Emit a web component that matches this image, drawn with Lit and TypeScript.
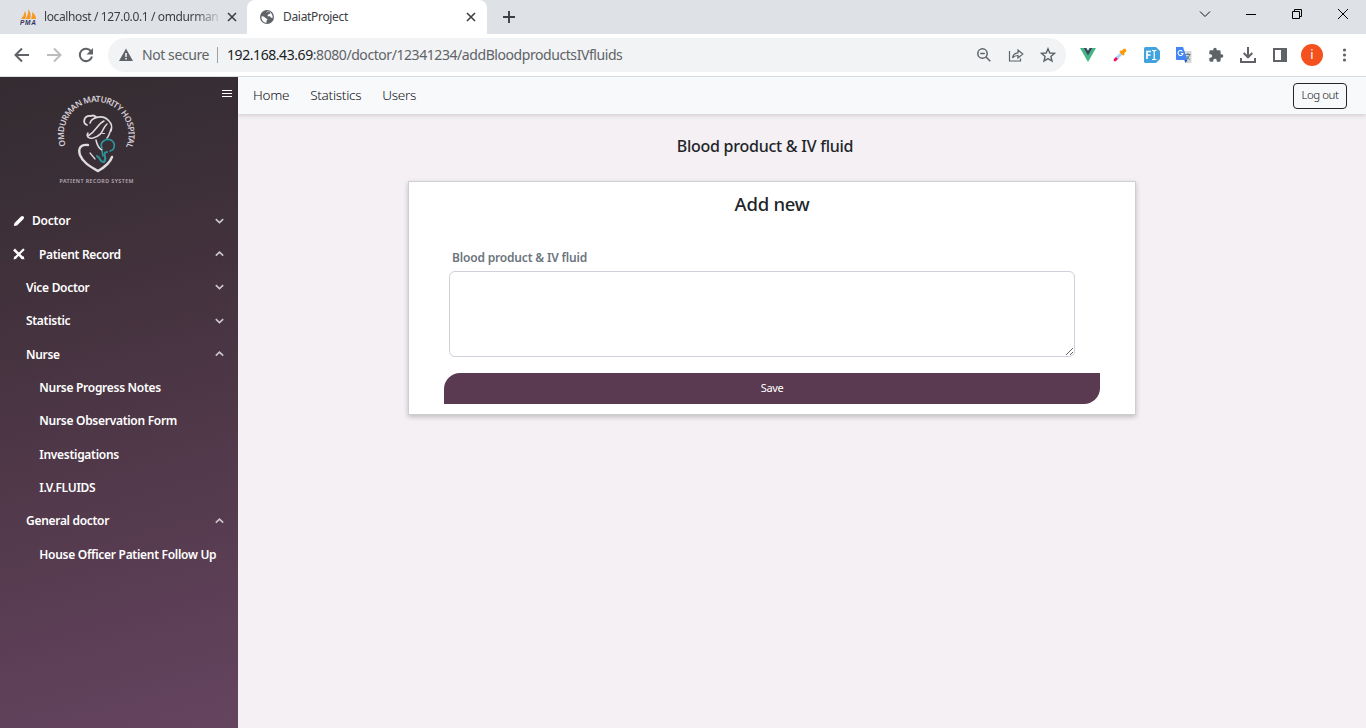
import { LitElement, html, css, svg } from "lit";
import { customElement } from "lit/decorators.js";

const chevron = (up: boolean) => html`<svg class="chev" width="9" height="6" viewBox="0 0 9 6"><path d=${up ? "M.8 4.6L4.5 1.200L8.2 4.600" : "M.8 1.200L4.5 4.600L8.2 1.200"} fill="none" stroke="#cfc9ce" stroke-width="1.6"/></svg>`;

@customElement("browser-tabs")
export class BrowserTabs extends LitElement {
  static styles = css`
    :host { display: flex; height: 34px; background: #dee1e6; color: #3c4043; font: 12px/34px "Noto Sans", sans-serif; }
    .tab { display: flex; align-items: center; box-sizing: border-box; height: 34px; }
    .first { width: 247px; padding-left: 20px; padding-right: 9px; }
    .active { width: 240px; background: #fff; border-radius: 8px 8px 0 0; padding-left: 12px; padding-right: 10px; }
    .label { white-space: nowrap; flex: 1; letter-spacing: -.21px; }
    .active .label { letter-spacing: -.32px; margin-left: 8px; }
    .first .label { margin-left: 7px; margin-right: 7px; -webkit-mask-image: linear-gradient(90deg, #000 150px, transparent 179px); mask-image: linear-gradient(90deg, #000 150px, transparent 179px); letter-spacing: -.38px; }
    .plus { margin: 10px 0 0 15px; }
    .window { margin-left: auto; display: flex; align-items: center; gap: 32px; padding: 0 16px 6px 0; }
    svg { display: block; flex: none; }
  `;
  render() {
    const close = html`<svg width="12" height="12" viewBox="0 0 12 12"><path d="M2 2l8 8M10 2l-8 8" stroke="#3c4043" stroke-width="1.6"/></svg>`;
    return html`
      <div class="tab first">
        <svg width="17" height="16" viewBox="0 0 17 16"><path d="M1 10Q4 7 5 2Q7 6 5 10ZM5.500 10Q9 5 8 0Q12 5 10 10ZM11 10Q13 6 12 3Q16 6 16 10Z" fill="#f8981d"/><text x="0" y="15.500" font-family="Liberation Sans" font-size="6.500" font-weight="700" font-style="italic" fill="#34345f" textLength="16">PMA</text></svg>
        <span class="label">localhost / 127.0.0.1 / omdurman</span>${close}
      </div>
      <div class="tab active">
        <svg width="16" height="16" viewBox="0 0 16 16"><circle cx="8" cy="8" r="7" fill="#5f6368"/><path d="M2.500 7.500C4 6.500 6 8 7 9.500C8.500 9.500 9 11 7.500 11.500V13.800C4.500 13.800 2.200 11 2.500 7.500ZM7 3.800C8 2.500 9 2.300 10.500 2.700L11.500 4.500L9 5.500L8.500 7.200H11L12 8.800H13.800C13.500 5 11 2.500 10 2.600Z" fill="#fff"/></svg>
        <span class="label">DaiatProject</span>${close}
      </div>
      <svg class="plus" width="14" height="14" viewBox="0 0 14 14"><path d="M7 1v12M1 7h12" stroke="#3c4043" stroke-width="1.900"/></svg>
      <div class="window">
        <svg width="14" height="12" viewBox="0 0 14 12"><path d="M2 3.500l5 5 5-5" fill="none" stroke="#111"/></svg>
        <svg width="14" height="12" viewBox="0 0 14 12"><path d="M2 6.500h10" stroke="#000"/></svg>
        <svg width="14" height="12" viewBox="0 0 14 12"><path d="M2.500 3.500h7v7h-7zM4.500 3.500v-2h7v7h-2" fill="none" stroke="#000"/></svg>
        <svg width="14" height="12" viewBox="0 0 14 12"><path d="M2 1l10 10M12 1L2 11" stroke="#000"/></svg>
      </div>`;
  }
}

@customElement("browser-toolbar")
export class BrowserToolbar extends LitElement {
  static styles = css`
    :host { display: flex; align-items: center; box-sizing: border-box; height: 43px; background: #fff; border-bottom: 1px solid #dadce0; font: 14px/34px "Noto Sans", sans-serif; }
    .nav { display: flex; gap: 16px; padding-left: 14px; width: 94px; }
    .bar { display: flex; align-items: center; box-sizing: border-box; width: 958px; height: 34px; border-radius: 17px; background: #f1f3f4; padding: 0 10px; color: #5f6368; white-space: nowrap; }
    .secure { letter-spacing: -.42px; margin-left: 8px; width: 75px; }
    .sep { width: 1px; height: 16px; background: #9aa0a6; margin-right: 9px; }
    .url { letter-spacing: -.43px; }
    .host { color: #202124; }
    .actions { margin-left: auto; display: flex; gap: 16px; }
    .ext { display: flex; gap: 16px; margin-left: 14px; align-items: center; }
    .avatar { width: 22px; height: 22px; margin: 0 -3px; border-radius: 50%; background: #f4511e; color: #fff; font-size: 13px; line-height: 21px; text-align: center; }
    svg { display: block; flex: none; }
  `;
  render() {
    return html`
      <div class="nav">
        <svg width="16" height="16" viewBox="0 0 16 16"><path d="M15 8H2M8 1.500L1.500 8L8 14.500" fill="none" stroke="#5f6368" stroke-width="2"/></svg>
        <svg width="16" height="16" viewBox="0 0 16 16"><path d="M1 8h13M8 1.500L14.500 8L8 14.500" fill="none" stroke="#babcbe" stroke-width="2"/></svg>
        <svg width="16" height="16" viewBox="0 0 16 16"><path d="M13.200 4.500A6.200 6.200 0 1 0 14 9.500" fill="none" stroke="#5f6368" stroke-width="2"/><path d="M15 1v6.500H8.500z" fill="#5f6368"/></svg>
      </div>
      <div class="bar">
        <svg width="16" height="16" viewBox="0 0 16 16"><path d="M8 1.500L15 14H1z" fill="#5f6368"/><path d="M8 6v4M8 11v1.600" stroke="#f1f3f4" stroke-width="1.600"/></svg>
        <span class="secure">Not secure</span><span class="sep"></span>
        <span class="url"><span class="host">192.168.43.69</span>:8080/doctor/12341234/addBloodproductsIVfluids</span>
        <div class="actions">
          <svg width="16" height="16" viewBox="0 0 16 16"><circle cx="6.500" cy="6.500" r="4.700" fill="none" stroke="#5f6368" stroke-width="1.500"/><path d="M4.200 6.500h4.600M10 10l4.300 4.300" stroke="#5f6368" stroke-width="1.500"/></svg>
          <svg width="16" height="16" viewBox="0 0 16 16"><path d="M1.500 4v10h11V11.500M4.500 11C5 7.500 7 6 10 5.800V3L14.800 7L10 11V8.500C7.500 8.500 6 9 4.500 11Z" fill="none" stroke="#5f6368" stroke-width="1.200"/></svg>
          <svg width="16" height="16" viewBox="0 0 16 16"><path d="M8 1.700L9.800 6L14.500 6.400L10.900 9.500L12 14L8 11.600L4 14L5.100 9.500L1.500 6.400L6.200 6Z" fill="none" stroke="#5f6368" stroke-width="1.400"/></svg>
        </div>
      </div>
      <div class="ext">
        <svg width="16" height="16" viewBox="0 0 16 16"><path d="M0 1h3.500L8 8.600L12.500 1H16L8 15z" fill="#41b883"/><path d="M3.500 1h2.900L8 3.700L9.600 1h2.900L8 8.800z" fill="#34495e"/></svg>
        <svg width="16" height="16" viewBox="0 0 16 16"><path d="M3 13L5 11" stroke="#f50b62" stroke-width="2.800" stroke-linecap="round"/><path d="M5 11L10 6" stroke="#a9d5fa" stroke-width="2.800"/><path d="M8 4l4 4" stroke="#ff9800" stroke-width="2"/><path d="M10.500 5.500L12.500 3.500" stroke="#ff9800" stroke-width="3.600" stroke-linecap="round"/></svg>
        <svg width="16" height="16" viewBox="0 0 16 16"><path d="M1.500 0H12l4 4v8l-4 4H1.500Q0 16 0 14.500v-13Q0 0 1.500 0z" fill="#42a4de"/><path d="M3 12V4.500h4M3 8h3.500" fill="none" stroke="#fff" stroke-width="1.700"/><path d="M8 3.500h1.500l.7.600.7-.6h1.500M10.200 4v8M8 12.500h1.500l.7-.6.700.6h1.500" fill="none" stroke="#fff" stroke-width="1.200"/></svg>
        <svg width="16" height="16" viewBox="0 0 16 16"><path d="M6 4h9.500v12H9z" fill="#d8d8d8"/><path d="M0 0h7l4.500 13H1Q0 13 0 12z" fill="#4285f4"/><path d="M8.500 13h3L9.500 16z" fill="#1a56b8"/><path d="M6.500 4.500A2.500 2.500 0 1 0 7 6.500H5" fill="none" stroke="#fff" stroke-width="1.100"/><path d="M9.500 7.500h5M12 6v1.500M13.800 7.500Q12.500 11 10.500 12.500M10.800 9Q12 11.500 14 12.800" fill="none" stroke="#607d8b"/></svg>
        <svg width="16" height="16" viewBox="0 0 24 24"><path d="M20.500 11H19V7a2 2 0 0 0-2-2h-4V3.500a2.500 2.500 0 0 0-5 0V5H4a2 2 0 0 0-2 2v3.800h1.500a2.700 2.700 0 0 1 0 5.400H2V20a2 2 0 0 0 2 2h3.800v-1.500a2.700 2.700 0 0 1 5.400 0V22H17a2 2 0 0 0 2-2v-4h1.500a2.500 2.500 0 0 0 0-5z" fill="#5f6368"/></svg>
        <svg width="16" height="16" viewBox="0 0 16 16"><path d="M8 0v10M3.700 6L8 10.300L12.300 6M1 11v4h14v-4" fill="none" stroke="#5f6368" stroke-width="2"/></svg>
        <svg width="16" height="16" viewBox="0 0 16 16"><path d="M1 1h14v14H1zM3 3v10h6V3z" fill="#5f6368" fill-rule="evenodd"/></svg>
        <div class="avatar">i</div>
        <svg width="16" height="16" viewBox="0 0 16 16"><g fill="#5f6368"><circle cx="8.500" cy="3" r="1.600"/><circle cx="8.500" cy="8" r="1.600"/><circle cx="8.500" cy="13" r="1.600"/></g></svg>
      </div>`;
  }
}

interface Entry { text: string; level: string; icon?: "pencil" | "tools"; open?: boolean; }
const entries: Entry[] = [
  { text: "Doctor", level: "doctor", icon: "pencil", open: false },
  { text: "Patient Record", level: "record", icon: "tools", open: true },
  { text: "Vice Doctor", level: "sub", open: false },
  { text: "Statistic", level: "sub", open: false },
  { text: "Nurse", level: "sub", open: true },
  { text: "Nurse Progress Notes", level: "leaf" },
  { text: "Nurse Observation Form", level: "leaf" },
  { text: "Investigations", level: "leaf" },
  { text: "I.V.FLUIDS", level: "leaf" },
  { text: "General doctor", level: "sub", open: true },
  { text: "House Officer Patient Follow Up", level: "leaf" },
];

@customElement("side-menu")
export class SideMenu extends LitElement {
  static styles = css`
    :host { display: block; box-sizing: border-box; width: 238px; height: 651px; background: linear-gradient(165deg, #332c31 0%, #41313b 30%, #543a4d 65%, #654460 100%); color: #fff; font: 600 12px/33.350px "Noto Sans", sans-serif; }
    .head { display: flex; justify-content: space-between; height: 127.350px; }
    .logo { margin: 13px 0 0 54px; }
    .burger { margin: 13px 6px 0 0; }
    .row { display: flex; align-items: center; height: 33.350px; padding-right: 14px; letter-spacing: -.3px; white-space: nowrap; }
    .row .chev { margin-left: auto; margin-bottom: 1px; }
    .doctor, .record { padding-left: 13px; }
    .doctor { letter-spacing: -.2px; }
    .sub { padding-left: 26px; }
    .leaf { padding-left: 39.300px; padding-right: 0; letter-spacing: -.29px; }
    .icon { margin-right: 7px; }
    .record .icon { margin-right: 14px; }
    svg { display: block; flex: none; }
  `;
  render() {
    const icons = {
      pencil: svg`<path d="M.8 11L1.500 8L8 1.500Q9.200.300 10.600 1.500Q11.700 2.900 10.500 4L4 10.500Z" fill="#fff"/>`,
      tools: svg`<path d="M2.500 9.500L10.300 1.700" stroke="#fff" stroke-width="2.200" stroke-linecap="round"/><path d="M1 1.500L10 10.500" stroke="#fff" stroke-width="2.500"/><path d="M.5 11.500L1.300 8.300L3.700 10.700ZM8 10.500L10.500 8L11.500 11.500z" fill="#fff"/>`,
    };
    return html`
      <div class="head">
        <svg class="logo" width="86" height="98" viewBox="0 0 86 98">
          <defs><path id="arc" d="M12 55.500A32.300 32.300 0 1 1 72.500 55.500"/></defs>
          <text font-family="Noto Sans" font-size="8.400" fill="#d8cfd8"><textPath href="#arc" textLength="126">OMDURMAN MATURITY HOSPITAL</textPath></text>
          <g fill="none" stroke="#dedcdd" stroke-linecap="round">
            <path d="M33 35C28 33 30 25 37 26C39 25 41 26 42 27" stroke-width="1.800"/>
            <path d="M36 33C38 27 49 24 55 31C58 34 58 38 57 41" stroke-width="1.600"/>
            <path d="M50 31C43 34 43 41 34 46M53 34C48 38 50 45 39 48C34 49 32 46 34 43M57 39C56 42 55 46 53 48M42 50C43 55 44 58 48 60" stroke-width="1.500"/>
            <path d="M34 55C26 54 24 59 26 65C29 73 37 77 44 81C51 77 56 73 58 67" stroke-width="2.400"/>
            <path d="M36 63L41 69" stroke-width="1.200"/>
            <path d="M48.500 43.500h2" stroke-width="1"/>
          </g>
          <g fill="none" stroke="#2a969b" stroke-linecap="round"><path d="M48 58C45 52 52 48 57 50C62 53 61 60 56 61" stroke-width="1.700"/><path d="M53 62C47 63 54 68 50 72C45 72 48 69 43 66" stroke-width="2"/><path d="M48 61L49 66" stroke-width="1.500"/></g>
          <text x="5.500" y="93" font-family="Noto Sans" font-size="5.300" fill="#b9acb8" textLength="74">PATIENT RECORD SYSTEM</text>
        </svg>
        <svg class="burger" width="10" height="8" viewBox="0 0 10 8"><path d="M0 .5h10M0 3.500h10M0 6.500h10" stroke="#fff"/></svg>
      </div>
      ${entries.map(e => html`<div class="row ${e.level}">
        ${e.icon ? html`<svg class="icon" width="12" height="12" viewBox="0 0 12 12">${icons[e.icon]}</svg>` : null}
        <span>${e.text}</span>${e.open === undefined ? null : chevron(e.open)}
      </div>`)}`;
  }
}

@customElement("app-root")
export class AppRoot extends LitElement {
  static styles = css`
    :host { display: block; width: 1366px; height: 728px; overflow: hidden; background: #f5f0f4; color: #212529; font-family: "Noto Sans", sans-serif; }
    .body { display: flex; height: 651px; }
    .main { flex: 1; }
    .top { display: flex; align-items: center; box-sizing: border-box; height: 37px; padding: 0 19px 0 15px; background: #f8f9fb; box-shadow: 0 2px 4px rgba(0,0,0,.13); color: #111417; font-size: 13.500px; line-height: 20px; font-weight: 300; letter-spacing: -.27px; }
    .link { margin-right: 21px; padding-bottom: 1px; }
    .logout { margin-left: auto; box-sizing: border-box; width: 54px; height: 26px; border: 1px solid #212529; border-radius: 4px; background: transparent; color: #111417; font: 300 11.500px/22px "Noto Sans", sans-serif; padding: 0 0 1px; letter-spacing: -.48px; }
    .title { margin: 20px 0 0; padding-right: 74px; font-size: 16px; line-height: 24px; font-weight: 500; text-align: center; letter-spacing: -.25px; }
    .card { box-sizing: border-box; width: 728px; height: 234px; margin: 23px 0 0 170px; border: 1px solid #ced0d0; background: #fff; box-shadow: 0 2px 5px rgba(0,0,0,.22); }
    .add { margin: 8px 0 0; font-size: 18.500px; line-height: 28px; font-weight: 500; text-align: center; letter-spacing: -.25px; }
    .label { display: block; margin: 31px 0 0 43px; font-size: 12px; line-height: 18px; font-weight: 600; color: #6c757d; letter-spacing: -.18px; }
    .notes { display: block; box-sizing: border-box; width: 626px; height: 86px; margin: 4px 0 0 40px; border: 1px solid #ced0da; border-radius: 6px; background: #fff; resize: vertical; }
    .save { display: block; width: 656px; height: 31px; margin: 16px 0 0 35px; border: 0; border-radius: 16px 0 16px 0; background: #5a3a50; color: #fff; font: 11px/29px "Noto Sans", sans-serif; padding: 0 0 2px; letter-spacing: -.4px; }
  `;
  render() {
    return html`
      <browser-tabs></browser-tabs>
      <browser-toolbar></browser-toolbar>
      <div class="body">
        <side-menu></side-menu>
        <div class="main">
          <div class="top"><span class="link">Home</span><span class="link">Statistics</span><span class="link">Users</span><button class="logout">Log out</button></div>
          <h1 class="title">Blood product &amp; IV fluid</h1>
          <div class="card">
            <h2 class="add">Add new</h2>
            <label class="label">Blood product &amp; IV fluid</label>
            <textarea class="notes"></textarea>
            <button class="save">Save</button>
          </div>
        </div>
      </div>`;
  }
}
